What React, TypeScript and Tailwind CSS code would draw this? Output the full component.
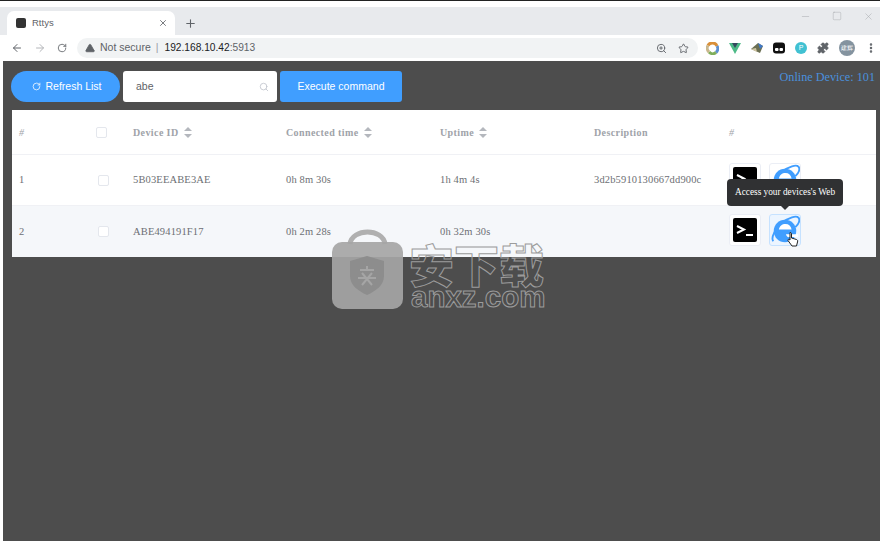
import {
  ArrowLeft,
  ArrowRight,
  EllipsisVertical,
  Minus,
  Plus,
  Puzzle,
  RotateCw,
  Search,
  Square,
  Star,
  TriangleAlert,
  X,
  ZoomIn,
} from "lucide-react";

const SERIF = "font-['Liberation_Serif','Times_New_Roman',serif]";
const SANS = "font-['Liberation_Sans',Arial,sans-serif]";

type Device = { n: number; id: string; connected: string; uptime: string; desc: string };

const DEVICES: Device[] = [
  { n: 1, id: "5B03EEABE3AE", connected: "0h 8m 30s", uptime: "1h 4m 4s", desc: "3d2b5910130667dd900c" },
  { n: 2, id: "ABE494191F17", connected: "0h 2m 28s", uptime: "0h 32m 30s", desc: "" },
];

function SortIcon() {
  return (
    <svg width="8" height="11" viewBox="0 0 8 11" className="ml-[5px] inline-block" fill="#b4b7bd">
      <path d="M4 0 8 4H0z" />
      <path d="M4 11 0 7h8z" />
    </svg>
  );
}

function IeIcon() {
  return (
    <svg width="32" height="30" viewBox="0 0 32 30">
      <path d="M3.500 27C.5 23 6 13 13 7 20 2 28-1 30.500 2c2 3-.5 7-3.500 10" fill="none" stroke="#409eff" strokeWidth="2" />
      <circle cx="16" cy="16" r="12" fill="#409eff" />
      <path d="M9.500 14.500C10 10.500 13 8.500 16.500 8.500s6 2 6.500 6z" fill="#fff" />
      <path d="M17 19.500h13v3H20.500c-1 .5-2.500 0-3.500-3z" fill="#fff" />
    </svg>
  );
}

function TermIcon() {
  return (
    <svg width="24" height="24" viewBox="0 0 24 24">
      <rect width="24" height="24" rx="2" fill="#000" />
      <path d="M4 8l7 3.500L4 15" fill="none" stroke="#fff" strokeWidth="2" />
      <path d="M13 17h7" stroke="#fff" strokeWidth="2" />
    </svg>
  );
}

function ActionButtons({ hovered }: { hovered?: boolean }) {
  return (
    <div className="mb-[3px] flex gap-[8px]">
      <div className="flex h-[32px] w-[32px] items-center justify-center rounded-[3px] border border-[#ebeef5] bg-white">
        <TermIcon />
      </div>
      <div
        className={`flex h-[32px] w-[32px] items-center justify-center rounded-[3px] border ${
          hovered ? "border-[#c6e2ff] bg-[#ecf5ff]" : "border-[#ebeef5] bg-white"
        }`}
      >
        <IeIcon />
      </div>
    </div>
  );
}

function Checkbox() {
  return <div className="h-[11px] w-[11px] rounded-[2px] border border-[#e4e7ed] bg-white" />;
}

function TableHeader() {
  const cell = "flex items-center text-[10px] font-bold tracking-[0.4px] text-[#a0a3a9]";
  return (
    <div className={`flex h-[45px] items-center border-b border-[#f0f1f5] bg-white ${SERIF}`}>
      <div className={`${cell} w-[78px] pl-[7px] italic font-normal`}>#</div>
      <div className="w-[43px] pl-[6px]">
        <Checkbox />
      </div>
      <div className={`${cell} w-[153px]`}>
        Device ID
        <SortIcon />
      </div>
      <div className={`${cell} w-[154px]`}>
        Connected time
        <SortIcon />
      </div>
      <div className={`${cell} w-[154px]`}>
        Uptime
        <SortIcon />
      </div>
      <div className={`${cell} w-[135px]`}>Description</div>
      <div className={`${cell} italic font-normal`}>#</div>
    </div>
  );
}

function DeviceRow({ device, striped }: { device: Device; striped: boolean }) {
  return (
    <div
      className={`flex h-[51px] items-center text-[10.5px] tracking-[0.15px] text-[#6d6f74] ${SERIF} ${
        striped ? "bg-[#f5f7fa]" : "border-b border-[#f0f1f5] bg-white"
      }`}
    >
      <div className="w-[78px] pl-[7px]">{device.n}</div>
      <div className="w-[43px] pl-[8px]">
        <Checkbox />
      </div>
      <div className="w-[153px]">{device.id}</div>
      <div className="w-[154px]">{device.connected}</div>
      <div className="w-[154px]">{device.uptime}</div>
      <div className="w-[135px] whitespace-nowrap">{device.desc}</div>
      <ActionButtons hovered={striped} />
    </div>
  );
}

function ColorRing() {
  return (
    <svg width="13" height="13" viewBox="0 0 13 13" fill="none" strokeWidth="3">
      <path d="M2 3.500A5 5 0 0 1 11 4" stroke="#d9903a" />
      <path d="M11 4a5 5 0 0 1-1 6.500" stroke="#5b8fd0" />
      <path d="M10 10.500A5 5 0 0 1 3 10" stroke="#7fae5a" />
      <path d="M3 10a5 5 0 0 1-1-6.500" stroke="#c9b78e" />
    </svg>
  );
}

function BrowserChrome() {
  return (
    <div className="h-[61px] shrink-0 bg-white">
      <div className="h-px bg-[#222]" />
      <div className="h-[6px] bg-white" />
      <div className={`flex h-[28px] items-end bg-[#e8eaed] pl-[7px] ${SANS}`}>
        <div className="flex h-[24px] w-[168px] items-center rounded-t-[7px] bg-white pl-[9px] pr-[7px]">
          <div className="h-[10px] w-[10px] rounded-[2px] bg-[#333]" />
          <span className="ml-[6px] flex-1 text-[9.5px] text-[#5f6368]">Rttys</span>
          <X size={10} color="#5f6368" />
        </div>
        <Plus size={13} color="#5f6368" className="mb-[5px] ml-[9px]" />
        <div className="flex flex-1 justify-end gap-[21px] self-start pr-[6px] pt-[4px]">
          <Minus size={11} color="#a0a3a8" strokeWidth={1} />
          <Square size={10} color="#a0a3a8" strokeWidth={1} />
          <X size={11} color="#a0a3a8" strokeWidth={1} />
        </div>
      </div>
      <div className={`flex h-[26px] items-center pl-[11px] ${SANS}`}>
        <ArrowLeft size={12} color="#5f6368" />
        <ArrowRight size={12} color="#b4b6ba" className="ml-[11px]" />
        <RotateCw size={10} color="#5f6368" className="ml-[11px]" />
        <div className="ml-[10px] flex h-[20px] w-[621px] items-center rounded-full bg-[#f1f3f4] pl-[8px] pr-[9px]">
          <TriangleAlert size={10} color="#5f6368" fill="#5f6368" />
          <span className="ml-[5px] text-[10.5px] text-[#5f6368]">Not secure</span>
          <span className="ml-[5px] text-[10.5px] text-[#9aa0a6]">|</span>
          <span className="ml-[6px] text-[10.2px] text-[#202124]">192.168.10.42</span>
          <span className="text-[10.2px] text-[#5f6368]">:5913</span>
          <ZoomIn size={11} color="#5f6368" className="ml-auto" />
          <Star size={11} color="#5f6368" className="ml-[11px]" />
        </div>
        <div className="ml-[8px] flex items-center gap-[10px]">
          <ColorRing />
          <svg width="12" height="11" viewBox="0 0 12 11">
            <path d="M0 0h12L6 11z" fill="#4dba87" />
            <path d="M3 0h6L6 5z" fill="#34495e" />
          </svg>
          <svg width="12" height="12" viewBox="0 0 12 12">
            <path d="M0 7 7 1l5 3-3 7z" fill="#6b6f52" />
            <path d="M7 1l5 3-3 3z" fill="#3f78c9" />
            <path d="M0 7l5-1 1 4z" fill="#cfc5a2" />
          </svg>
          <svg width="12" height="12" viewBox="0 0 12 12">
            <rect width="12" height="11" y="0.500" rx="3" fill="#111" />
            <rect x="2" y="6" width="3.500" height="3" rx="1" fill="#fff" />
            <rect x="6.500" y="6" width="3.500" height="3" rx="1" fill="#fff" />
          </svg>
          <div className="flex h-[12px] w-[12px] items-center justify-center rounded-full bg-[#41c1d2] text-[7px] text-white">
            P
          </div>
          <Puzzle size={12} color="#5f6368" fill="#5f6368" />
          <div className="flex h-[16px] w-[16px] items-center justify-center rounded-full bg-[#84939f] text-[6px] text-white">
            建辉
          </div>
          <EllipsisVertical size={12} color="#5f6368" strokeWidth={3} />
        </div>
      </div>
    </div>
  );
}

function Toolbar() {
  return (
    <div className={`flex h-[49px] items-start justify-between pl-[8px] pr-[5px] pt-[10px] ${SANS}`}>
      <div className="flex gap-[3px]">
        <button className="flex h-[31px] w-[109px] items-center justify-center gap-[4px] rounded-full bg-[#409eff] pl-[3px] text-[10.5px] text-white">
          <RotateCw size={9} />
          Refresh List
        </button>
        <div className="flex h-[31px] w-[154px] items-center rounded-[3px] bg-white pl-[13px] pr-[8px] text-[10.5px] text-[#606266]">
          <span className="flex-1">abe</span>
          <Search size={10} color="#c0c4cc" />
        </div>
        <button className="h-[31px] w-[122px] rounded-[3px] bg-[#409eff] text-[10.5px] text-white">
          Execute command
        </button>
      </div>
      <div className={`-mt-[2px] text-[12.2px] leading-[16px] text-[#4a90dc] ${SERIF}`}>Online Device: 101</div>
    </div>
  );
}

function Watermark() {
  const outline = "text-transparent [-webkit-text-stroke:1px_#9c9c9c]";
  return (
    <div className="pointer-events-none absolute left-[332px] top-[228px] flex items-start gap-[6px]">
      <svg width="71" height="81" viewBox="0 0 71 81">
        <path d="M18 16C20 0 51 0 53 16" fill="none" stroke="#b0b0b0" strokeWidth="5" />
        <rect y="14" width="71" height="67" rx="10" fill="#a5a5a5" fillOpacity="0.92" />
        <path d="M35 28l17 5v15c0 9-8 15-17 19-9-4-17-10-17-19V33z" fill="#8d8d8d" />
        <path d="M28 42h14M26 50h18M35 38v5M30 45l10 12M40 45 30 57" stroke="#a5a5a5" strokeWidth="2" fill="none" />
      </svg>
      <div className="mt-[13px] flex flex-col">
        <div className={`h-[45px] text-[45px] font-black leading-[45px] font-['Noto_Sans_CJK_SC',sans-serif] ${outline}`}>
          安下载
        </div>
        <div className={`ml-[2px] h-[22px] text-[29.5px] font-bold leading-[22px] ${SANS} ${outline}`}>anxz.com</div>
      </div>
    </div>
  );
}

export default function App() {
  return (
    <div className="relative flex h-[541px] w-[880px] flex-col overflow-hidden bg-white">
      <BrowserChrome />
      <div className="ml-[3px] flex-1 bg-[#4d4d4d]">
        <Toolbar />
        <div className="ml-[9px] mr-[4px]">
          <TableHeader />
          {DEVICES.map((d, i) => (
            <DeviceRow key={d.id} device={d} striped={i === 1} />
          ))}
        </div>
      </div>
      <Watermark />
      <div className={`absolute left-[727px] top-[179px] flex h-[27px] w-[116px] items-center justify-center rounded-[4px] bg-[#303133] text-[9.3px] text-white ${SERIF}`}>
        Access your devices's Web
        <div className="absolute -bottom-[4px] left-[53px] h-0 w-0 border-x-[5px] border-t-[5px] border-x-transparent border-t-[#303133]" />
      </div>
      <svg width="12" height="16" viewBox="0 0 12 16" className="absolute left-[787px] top-[231px]">
        <path d="M3 1.500c1 0 1.500.5 1.500 1.500v4l5 1.500c1 .5 1.500 1 1 2.500L9.500 15H5L1 9.500c-.5-1 .5-1.500 2-.5V3c0-1 0-1.500 0-1.500z" fill="#fff" stroke="#222" strokeWidth="1" />
      </svg>
    </div>
  );
}
